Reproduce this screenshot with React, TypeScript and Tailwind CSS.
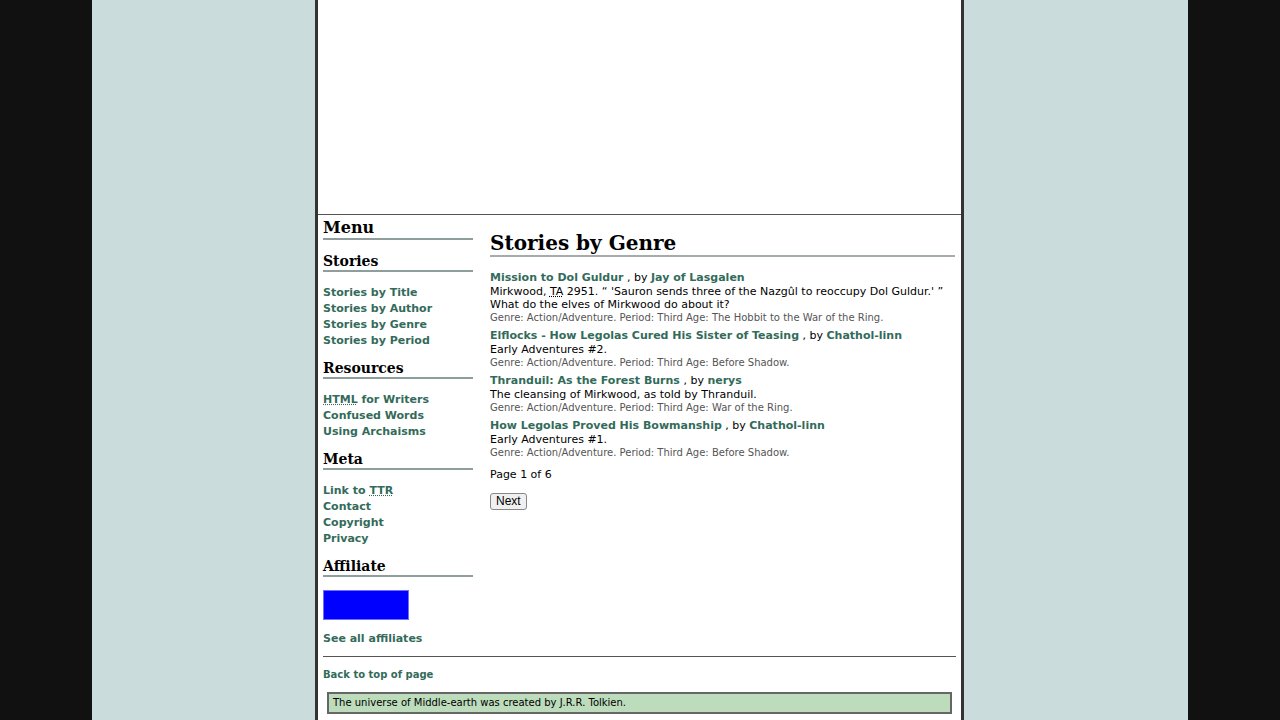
const stories = [
  {
    title: "Mission to Dol Guldur",
    author: "Jay of Lasgalen",
    summary: (
      <>
        Mirkwood, <span className="underline decoration-dotted">TA</span> 2951. “ 'Sauron sends three of the Nazgûl to reoccupy Dol Guldur.' ” What do the elves of Mirkwood do about it?
      </>
    ),
    period: "Third Age: The Hobbit to the War of the Ring.",
  },
  {
    title: "Elflocks - How Legolas Cured His Sister of Teasing",
    author: "Chathol-linn",
    summary: <>Early Adventures #2.</>,
    period: "Third Age: Before Shadow.",
  },
  {
    title: "Thranduil: As the Forest Burns",
    author: "nerys",
    summary: <>The cleansing of Mirkwood, as told by Thranduil.</>,
    period: "Third Age: War of the Ring.",
  },
  {
    title: "How Legolas Proved His Bowmanship",
    author: "Chathol-linn",
    summary: <>Early Adventures #1.</>,
    period: "Third Age: Before Shadow.",
  },
];

const link = "font-bold text-[#336b5a]";

function SideHead({ children, big }: { children: React.ReactNode; big?: boolean }) {
  return (
    <h3
      className={
        "font-['DejaVu_Serif',serif] font-bold text-black border-b-2 border-[#8e9e9c] mb-[13px] pb-[1px] " +
        (big ? "text-[16px] leading-[18px]" : "text-[14px] leading-[15px] pt-[1px]")
      }
    >
      {children}
    </h3>
  );
}

function SideLinks({ items }: { items: React.ReactNode[] }) {
  return (
    <ul className="mb-[11px]">
      {items.map((it, i) => (
        <li key={i} className={link + " text-[11px] leading-[16px]"}>
          {it}
        </li>
      ))}
    </ul>
  );
}

const dotted = "underline decoration-dotted";

export default function App() {
  return (
    <div className="min-h-screen bg-[#111111] font-['DejaVu_Sans',Verdana,sans-serif]">
      <div className="mx-auto w-[1096px] min-h-screen bg-[#cbdcdc] overflow-hidden">
        <div className="ml-[223px] w-[649px] min-h-screen bg-white border-x-[3px] border-[#333333]">
          <div className="h-[215px] border-b border-[#555555]" />
          <div className="flex px-[5px] pt-[4px]">
            <aside className="w-[150px] shrink-0">
              <SideHead big>Menu</SideHead>
              <SideHead>Stories</SideHead>
              <SideLinks items={["Stories by Title", "Stories by Author", "Stories by Genre", "Stories by Period"]} />
              <SideHead>Resources</SideHead>
              <SideLinks
                items={[
                  <>
                    <span className={dotted}>HTML</span> for Writers
                  </>,
                  "Confused Words",
                  "Using Archaisms",
                ]}
              />
              <SideHead>Meta</SideHead>
              <SideLinks
                items={[
                  <>
                    Link to <span className={dotted}>TTR</span>
                  </>,
                  "Contact",
                  "Copyright",
                  "Privacy",
                ]}
              />
              <SideHead>Affiliate</SideHead>
              <div className="w-[86px] h-[30px] bg-[#0000ff] border border-[#6f6fff] mb-[11px]" />
              <div className={link + " text-[11px] leading-[16px]"}>See all affiliates</div>
            </aside>
            <main className="flex-1 ml-[17px] pr-[1px] pt-[12px]">
              <h1 className="font-['DejaVu_Serif',serif] font-bold text-[20px] leading-[24px] border-b-2 border-[#a5adab] mb-[14px]">
                Stories by Genre
              </h1>
              {stories.map((s) => (
                <div key={s.title} className="mb-[5px]">
                  <div className="text-[11px] leading-[14px]">
                    <span className={link}>{s.title}</span> , by <span className={link}>{s.author}</span>
                  </div>
                  <div className="text-[11px] leading-[13px] text-black">{s.summary}</div>
                  <div className="text-[10px] leading-[13px] text-[#555555]">
                    Genre: Action/Adventure. Period: {s.period}
                  </div>
                </div>
              ))}
              <p className="text-[11px] leading-[13px] mt-[9px] mb-[12px]">Page 1 of 6</p>
              <div className="flex">
                <button className="px-[5px] py-0 leading-[15px] bg-[#f0f0f0] border border-[#888] rounded-[3px] font-['Liberation_Sans',sans-serif] text-[12px]">
                  Next
                </button>
              </div>
            </main>
          </div>
          <div className="mx-[5px] mt-[9px] border-t border-[#555]" />
          <div className={link + " text-[10px] leading-[12px] px-[5px] mt-[12px] mb-[11px]"}>Back to top of page</div>
          <div className="mx-[9px] border-2 border-[#666] bg-[#bcdcbc] px-[4px] py-[3px] text-[10px] leading-[12px]">
            The universe of Middle-earth was created by J.R.R. Tolkien.
          </div>
        </div>
      </div>
    </div>
  );
}
